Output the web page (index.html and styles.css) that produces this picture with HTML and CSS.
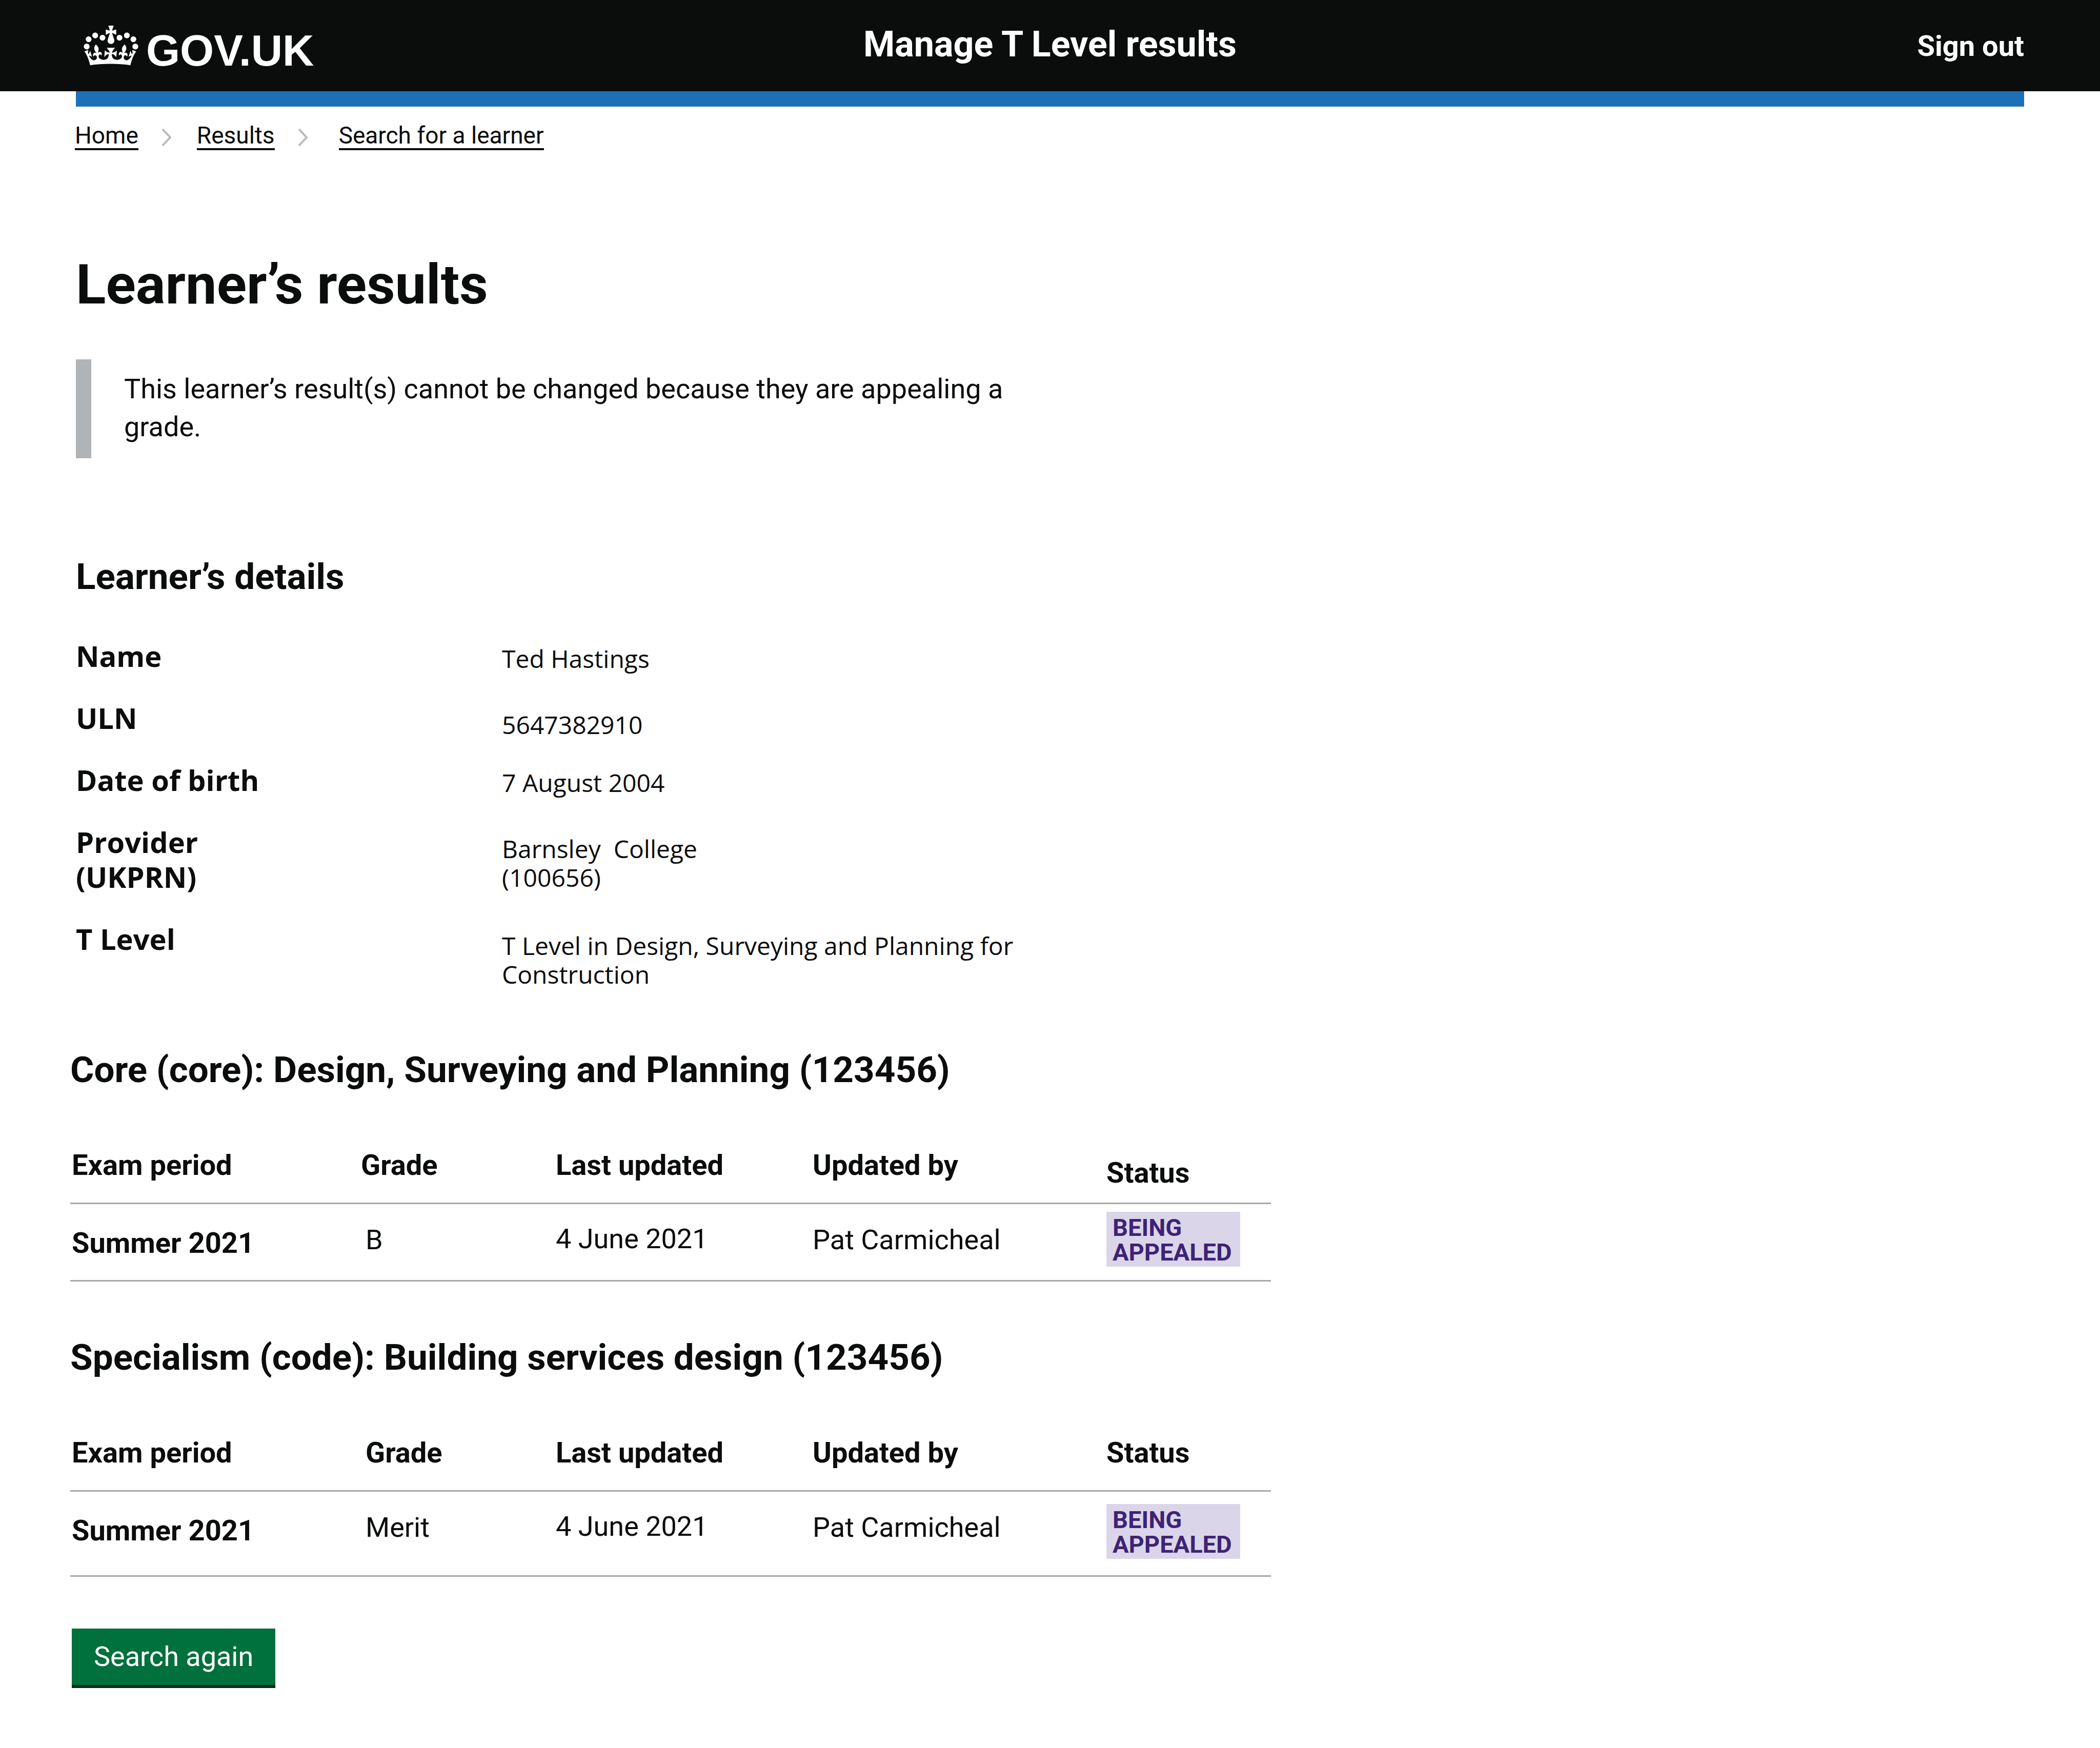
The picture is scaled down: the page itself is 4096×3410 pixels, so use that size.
FILE: index.html
```html
<!DOCTYPE html>
<html lang="en">
<head>
  <meta charset="utf-8">
  <meta name="viewport" content="width=device-width, initial-scale=1">
  <title>Learner’s results – Manage T Level results – GOV.UK</title>
  <link rel="stylesheet" href="styles.css">
</head>
<body>
  <header class="header">
    <a class="logo" href="#">
      <svg class="logo-crown" viewBox="0 0 132 97" aria-hidden="true">
        <path fill="currentColor" d="M25 30.2c3.5 1.5 7.7-.2 9.1-3.7 1.5-3.6-.2-7.8-3.9-9.2-3.6-1.4-7.6.3-9.1 3.9-1.4 3.5.3 7.5 3.9 9zM9 39.5c3.6 1.5 7.8-.2 9.2-3.7 1.5-3.6-.2-7.8-3.9-9.1-3.6-1.5-7.6.2-9.1 3.8-1.4 3.5.3 7.5 3.8 9zM4.4 57.2c3.5 1.5 7.7-.2 9.1-3.8 1.5-3.6-.2-7.7-3.9-9.1-3.5-1.5-7.6.3-9.1 3.8-1.4 3.5.3 7.6 3.9 9.1zm38.3-21.4c3.5 1.5 7.7-.2 9.1-3.8 1.5-3.6-.2-7.7-3.9-9.1-3.6-1.5-7.6.3-9.1 3.8-1.3 3.6.4 7.7 3.9 9.1zm64.4-5.6c-3.6 1.5-7.8-.2-9.1-3.7-1.5-3.6.2-7.8 3.8-9.2 3.6-1.4 7.7.3 9.2 3.9 1.3 3.5-.4 7.5-3.9 9zm15.9 9.3c-3.6 1.5-7.7-.2-9.1-3.7-1.5-3.6.2-7.8 3.7-9.1 3.6-1.5 7.7.2 9.2 3.8 1.5 3.5-.3 7.5-3.8 9zm4.7 17.7c-3.6 1.5-7.8-.2-9.2-3.8-1.5-3.6.2-7.7 3.9-9.1 3.6-1.5 7.7.3 9.2 3.8 1.3 3.5-.4 7.6-3.9 9.1zM89.3 35.8c-3.6 1.5-7.8-.2-9.2-3.8-1.4-3.6.2-7.7 3.9-9.1 3.6-1.5 7.7.3 9.2 3.8 1.4 3.6-.3 7.7-3.9 9.1zM69.7 17.7l8.9 4.7V9.3l-8.9 2.8c-.2-.3-.5-.6-.9-.9L72.4 0H59.6l3.5 11.2c-.3.3-.6.5-.9.9l-8.8-2.8v13.1l8.8-4.7c.3.3.6.7.9.9l-5 15.4v.1c-.2.8-.4 1.6-.4 2.4 0 4.1 3.1 7.5 7 8.1h.2c.3 0 .7.1 1 .1.4 0 .7 0 1-.1h.2c4-.6 7.1-4.1 7.1-8.1 0-.8-.1-1.7-.4-2.4V34l-5.1-15.4c.4-.2.7-.6 1-.9zM66 92.8c16.9 0 32.8 1.1 47.1 3.2 4-16.9 8.9-26.7 14-33.5l-9.6-3.4c1 4.9 1.1 7.2 0 10.2-1.5-1.4-3-4.3-4.2-8.7L108.6 76c2.8-2 5-3.2 7.5-3.3-4.4 9.4-10 11.9-13.6 11.2-4.3-.8-6.3-4.6-5.6-7.9 1-4.7 5.7-5.9 8-.5 4.3-8.7-3-11.4-7.6-8.8 7.1-7.2 7.9-13.5 2.1-21.1-8 6.1-8.1 12.3-4.5 20.8-4.7-5.4-12.1-2.5-9.5 6.2 3.4-5.2 7.9-2 7.2 3.1-.6 4.3-6.4 7.8-13.5 7.2-10.3-.9-10.9-8-11.2-13.8 2.5-.5 7.1 1.8 11 7.3L80.2 60c-4.1 4.4-8 5.3-12.3 5.4 1.4-4.4 8-11.6 8-11.6H55.5s6.4 7.2 7.9 11.6c-4.2-.1-8-1-12.3-5.4l-1.4 16.4c3.9-5.5 8.5-7.7 10.9-7.3-.3 5.8-.9 12.8-11.1 13.8-7.2.6-12.9-2.9-13.5-7.2-.7-5 3.8-8.3 7.1-3.1 2.7-8.7-4.6-11.6-9.4-6.2 3.7-8.5 3.6-14.7-4.6-20.8-5.8 7.6-5 13.9 2.2 21.1-4.7-2.6-11.9.1-7.7 8.8 2.3-5.5 7.1-4.2 8.1.5.7 3.3-1.3 7.1-5.7 7.9-3.5.7-9-1.8-13.5-11.2 2.5.1 4.7 1.3 7.5 3.3l-4.7-15.4c-1.2 4.4-2.7 7.2-4.3 8.7-1.1-3-.9-5.3 0-10.2l-9.5 3.4c5 6.9 9.9 16.7 14 33.5 14.8-2.1 30.8-3.2 47.7-3.2z"/>
      </svg>
      <span class="logo-text">GOV.UK</span>
    </a>
    <a class="service-name" href="#">Manage T Level results</a>
    <a class="sign-out" href="#">Sign out</a>
  </header>
  <div class="header-bar"></div>

  <nav aria-label="Breadcrumb">
    <ol class="breadcrumbs">
      <li><a href="#">Home</a></li>
      <li>
        <svg class="chevron" viewBox="0 0 20 34" aria-hidden="true"><path d="M2 1l15 16L2 33"/></svg>
        <a href="#">Results</a>
      </li>
      <li class="current">
        <svg class="chevron" viewBox="0 0 20 34" aria-hidden="true"><path d="M2 1l15 16L2 33"/></svg>
        <a href="#">Search for a learner</a>
      </li>
    </ol>
  </nav>

  <main class="main">
    <section class="intro">
      <h1>Learner’s results</h1>
      <p class="inset">This learner’s result(s) cannot be changed because they are appealing a grade.</p>

      <h2>Learner’s details</h2>
      <dl class="details">
        <div class="detail">
          <dt>Name</dt>
          <dd>Ted Hastings</dd>
        </div>
        <div class="detail detail-low">
          <dt>ULN</dt>
          <dd>5647382910</dd>
        </div>
        <div class="detail">
          <dt>Date of birth</dt>
          <dd>7 August 2004</dd>
        </div>
        <div class="detail detail-low">
          <dt>Provider<br>(UKPRN)</dt>
          <dd>Barnsley&nbsp; College<br>(100656)</dd>
        </div>
        <div class="detail detail-low">
          <dt>T Level</dt>
          <dd>T Level in Design, Surveying and Planning for Construction</dd>
        </div>
      </dl>
    </section>

    <section class="results results-core">
      <h2 id="core-title">Core (core): Design, Surveying and Planning (123456)</h2>
      <table aria-labelledby="core-title">
        <colgroup>
          <col class="col-period"><col class="col-grade"><col class="col-date"><col class="col-user"><col class="col-status">
        </colgroup>
        <thead>
          <tr>
            <th scope="col">Exam period</th>
            <th scope="col" class="grade">Grade</th>
            <th scope="col">Last updated</th>
            <th scope="col">Updated by</th>
            <th scope="col" class="status">Status</th>
          </tr>
        </thead>
        <tbody>
          <tr>
            <th scope="row">Summer 2021</th>
            <td class="grade">B</td>
            <td class="date">4 June 2021</td>
            <td>Pat Carmicheal</td>
            <td class="status"><strong class="tag">BEING<br>APPEALED</strong></td>
          </tr>
        </tbody>
      </table>
    </section>

    <section class="results results-specialism">
      <h2 id="specialism-title">Specialism (code): Building services design (123456)</h2>
      <table aria-labelledby="specialism-title">
        <colgroup>
          <col class="col-period"><col class="col-grade"><col class="col-date"><col class="col-user"><col class="col-status">
        </colgroup>
        <thead>
          <tr>
            <th scope="col">Exam period</th>
            <th scope="col" class="grade">Grade</th>
            <th scope="col">Last updated</th>
            <th scope="col">Updated by</th>
            <th scope="col" class="status">Status</th>
          </tr>
        </thead>
        <tbody>
          <tr>
            <th scope="row">Summer 2021</th>
            <td class="grade">Merit</td>
            <td class="date">4 June 2021</td>
            <td>Pat Carmicheal</td>
            <td class="status"><strong class="tag">BEING<br>APPEALED</strong></td>
          </tr>
        </tbody>
      </table>
    </section>

    <div class="actions">
      <button class="button" type="button">Search again</button>
    </div>
  </main>
</body>
</html>
```
FILE: styles.css
```css
* {
  box-sizing: border-box;
}

body {
  margin: 0;
  background: #fff;
  color: #0b0c0c;
  font-family: Roboto, "Liberation Sans", sans-serif;
  font-size: 54px;
  line-height: 64px;
}

h1, h2, p, dl, dd, ol {
  margin: 0;
  padding: 0;
}

a {
  color: inherit;
  text-decoration: none;
}

/* Header */

.header {
  display: grid;
  grid-template-columns: 1fr auto 1fr;
  align-items: start;
  min-height: 178px;
  padding: 0 148px;
  background: #0b0c0c;
  color: #fff;
  font-weight: 700;
}

.logo {
  display: flex;
  align-items: baseline;
  gap: 15px;
  padding: 50px 0 0 15px;
}

.logo-crown {
  width: 107px;
  height: 78px;
}

.logo-text {
  font-family: "Liberation Sans", sans-serif;
  font-size: 85px;
  line-height: 80px;
}

.service-name {
  padding-top: 46px;
  font-size: 70px;
  line-height: 80px;
}

.sign-out {
  justify-self: end;
  padding-top: 58px;
  font-size: 56px;
}

.header-bar {
  height: 30px;
  margin: 0 148px;
  background: #1d70b8;
}

/* Breadcrumbs */

.breadcrumbs {
  display: flex;
  padding: 31px 146px 0;
  list-style: none;
  font-size: 46px;
  line-height: 50px;
}

.breadcrumbs li {
  display: flex;
  align-items: center;
}

.breadcrumbs a {
  border-bottom: 4px solid #0b0c0c;
}

.chevron {
  width: 20px;
  height: 34px;
  margin: 4px 49px 0 45px;
  fill: none;
  stroke: #b8babb;
  stroke-width: 4;
}

.current .chevron {
  margin-right: 60px;
}

/* Page content */

.main {
  padding: 202px 148px 118px 137px;
}

.intro {
  padding-left: 11px;
}

h1 {
  font-size: 108px;
  line-height: 120px;
}

h2 {
  font-size: 71px;
  line-height: 80px;
}

.inset {
  max-width: 1842px;
  margin: 86px 0 191px;
  padding: 21px 0 24px 64px;
  border-left: 30px solid #b1b4b6;
  line-height: 74px;
}

.details {
  display: grid;
  gap: 53px;
  margin-top: 80px;
  font-family: "Open Sans", "Noto Sans", sans-serif;
}

.detail {
  display: grid;
  grid-template-columns: 831px minmax(0, 1100px);
}

.detail dt {
  font-size: 56px;
  font-weight: 700;
  line-height: 68px;
}

.detail dd {
  padding-top: 12px;
  font-size: 48px;
  line-height: 56px;
}

.detail-low dd {
  margin-bottom: -8px;
  padding-top: 20px;
}

/* Result tables */

.results {
  margin-top: 108px;
}

.results-core {
  margin-top: 126px;
}

table {
  width: 100%;
  max-width: 2342px;
  margin-top: 114px;
  border-spacing: 0;
  table-layout: fixed;
}

.col-period { width: 567px; }
.col-grade { width: 380px; }
.col-date { width: 501px; }
.col-user { width: 573px; }

th, td {
  padding: 0;
  border-bottom: 3px solid #a8a8a8;
  text-align: left;
  vertical-align: top;
}

th {
  font-size: 56px;
  font-weight: 700;
}

thead th {
  padding-bottom: 41px;
}

th:first-child {
  padding-left: 3px;
}

.grade {
  padding-left: 9px;
}

tbody th {
  padding-top: 44px;
  padding-bottom: 40px;
}

tbody td {
  padding-top: 38px;
}

tbody .date {
  padding-top: 36px;
}

tbody .status {
  padding-top: 15px;
}

.results-core thead .grade {
  padding-left: 0;
}

.results-core thead .status {
  padding-top: 15px;
  padding-bottom: 26px;
}

.results-specialism tbody th {
  padding-bottom: 55px;
}

.results-specialism tbody .status {
  padding-top: 24px;
}

.tag {
  display: inline-block;
  padding: 7px 16px 4px 12px;
  background: #dbd5e9;
  color: #3d2375;
  font-size: 47px;
  line-height: 48px;
  vertical-align: top;
}

/* Actions */

.actions {
  margin-top: 101px;
  padding-left: 3px;
}

.button {
  display: block;
  padding: 0 43px;
  border: 0;
  border-bottom: 6px solid #002d18;
  background: #00703c;
  color: #fff;
  font: inherit;
  line-height: 110px;
}
```
